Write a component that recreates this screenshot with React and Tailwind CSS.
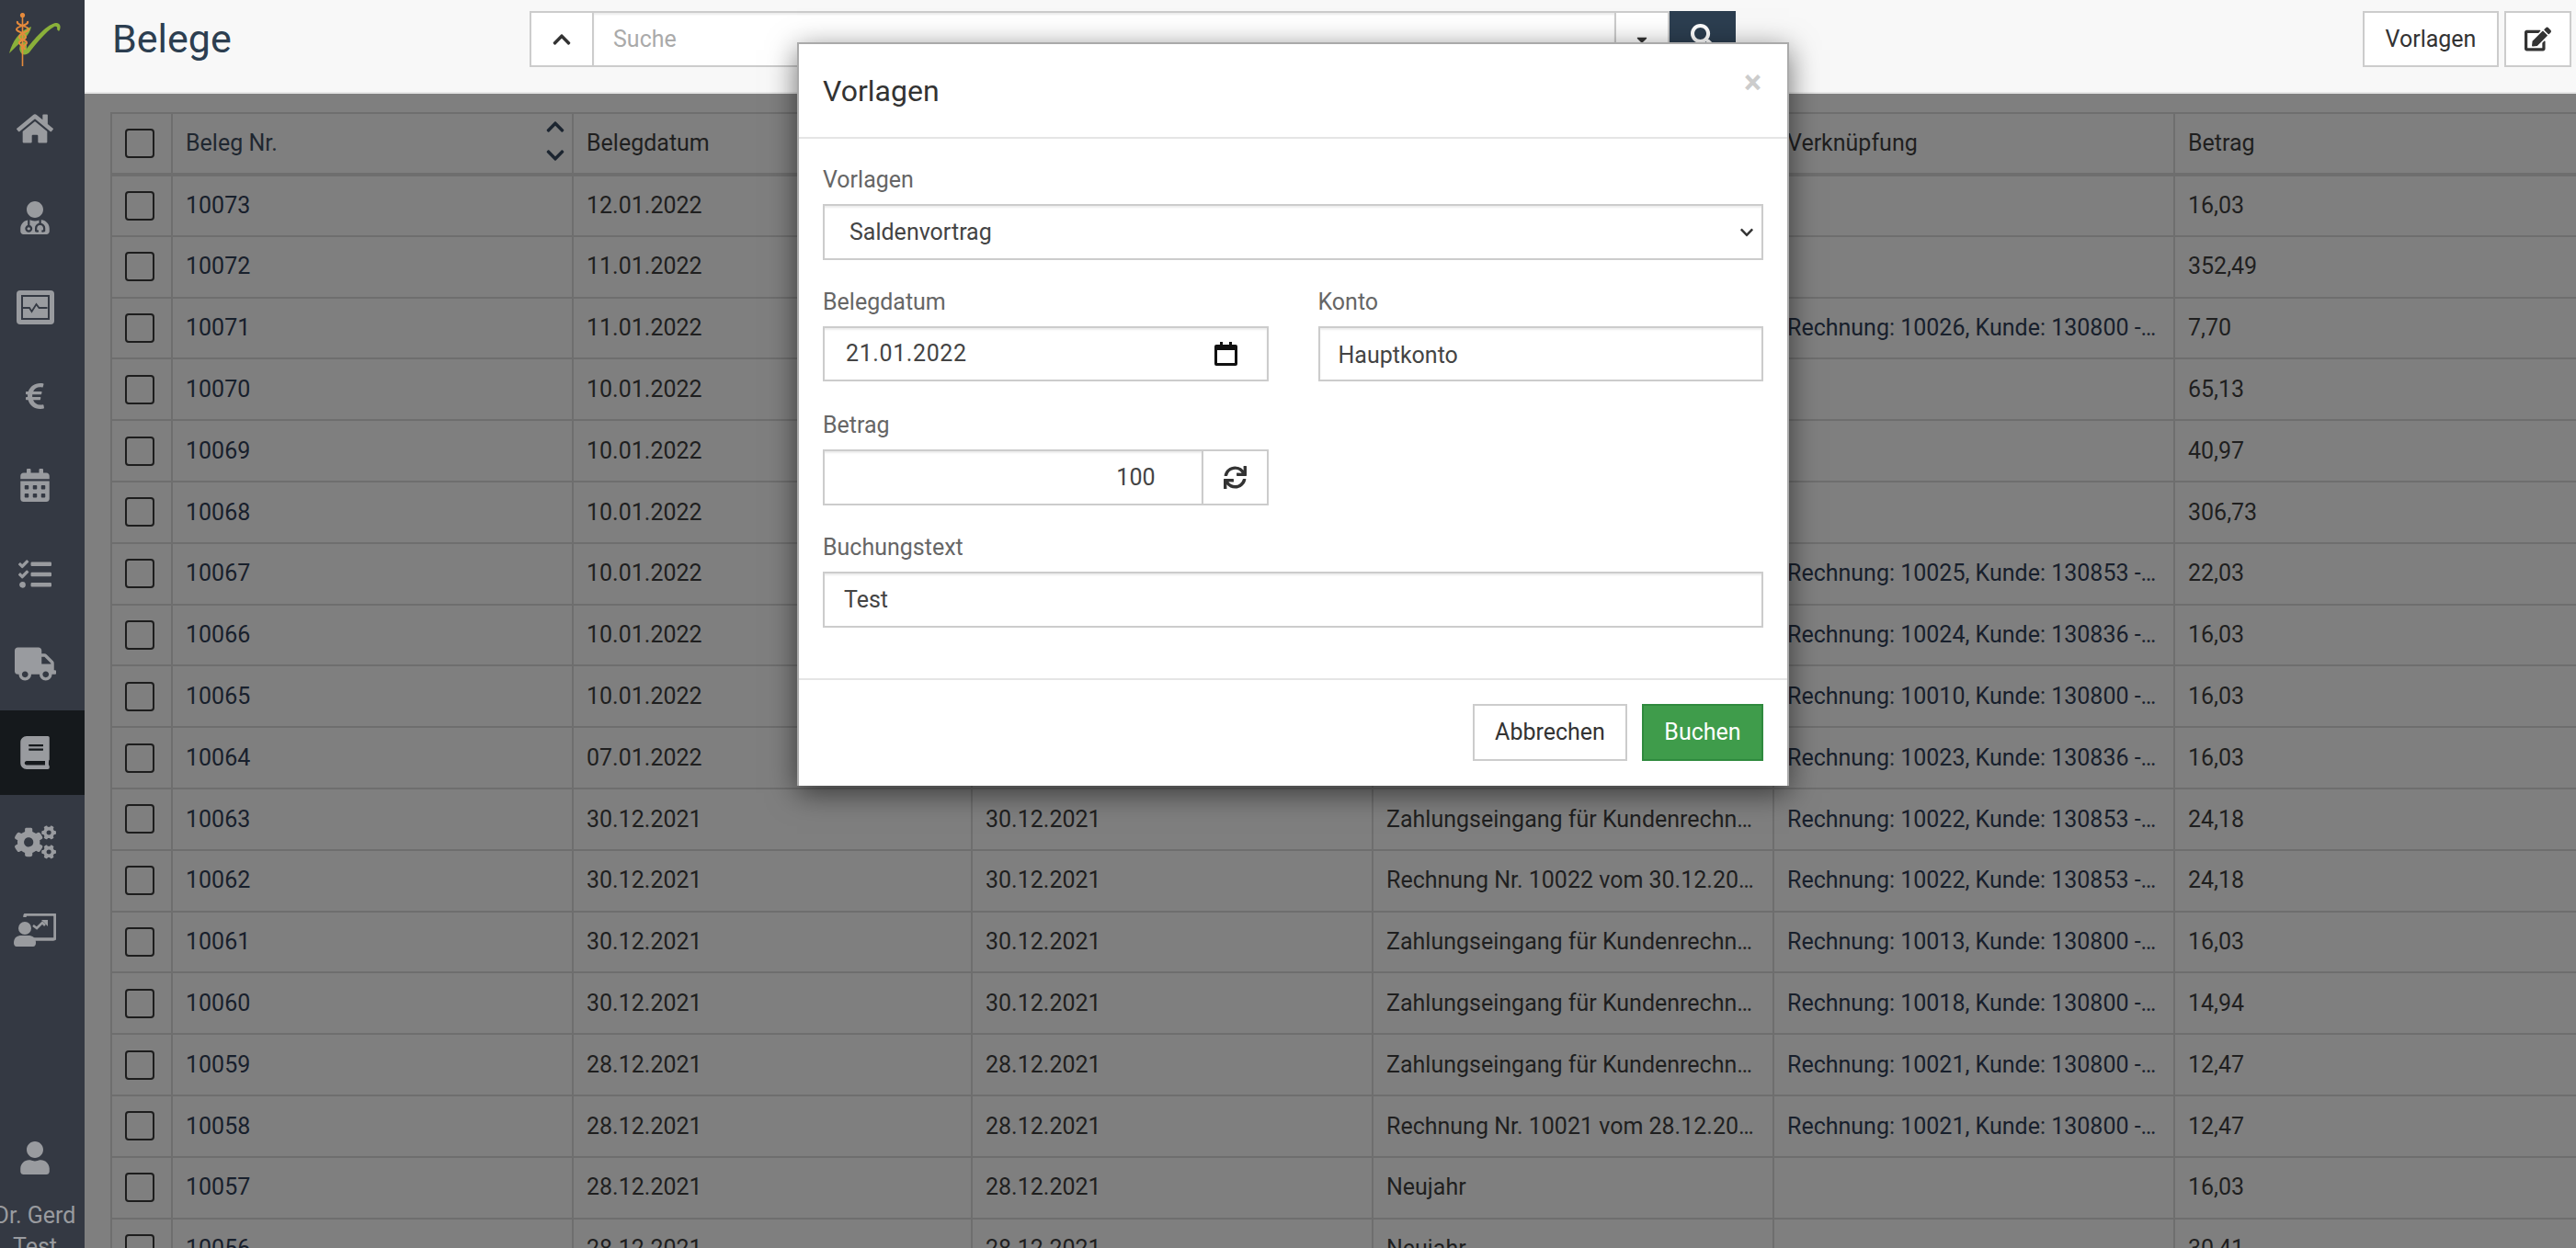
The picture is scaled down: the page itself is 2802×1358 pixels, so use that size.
import React from 'react';
import {
    FaHome, FaUserMd, FaEuroSign, FaCalendarAlt, FaTasks, FaTruck, FaBook, FaCogs,
    FaUser, FaSearch, FaSync, FaEdit, FaChevronUp, FaChevronDown, FaCaretDown,
} from 'react-icons/fa';

const ZE = 'Zahlungseingang für Kundenrechnung';

const rows = [
    ['10073', '12.01.2022', '', '', '16,03'],
    ['10072', '11.01.2022', '', '', '352,49'],
    ['10071', '11.01.2022', '', 'Rechnung: 10026, Kunde: 130800 - Mustermann', '7,70'],
    ['10070', '10.01.2022', '', '', '65,13'],
    ['10069', '10.01.2022', '', '', '40,97'],
    ['10068', '10.01.2022', '', '', '306,73'],
    ['10067', '10.01.2022', '', 'Rechnung: 10025, Kunde: 130853 - Mustermann', '22,03'],
    ['10066', '10.01.2022', '', 'Rechnung: 10024, Kunde: 130836 - Mustermann', '16,03'],
    ['10065', '10.01.2022', '', 'Rechnung: 10010, Kunde: 130800 - Mustermann', '16,03'],
    ['10064', '07.01.2022', '', 'Rechnung: 10023, Kunde: 130836 - Mustermann', '16,03'],
    ['10063', '30.12.2021', ZE, 'Rechnung: 10022, Kunde: 130853 - Mustermann', '24,18'],
    ['10062', '30.12.2021', 'Rechnung Nr. 10022 vom 30.12.2021 an Kunde', 'Rechnung: 10022, Kunde: 130853 - Mustermann', '24,18'],
    ['10061', '30.12.2021', ZE, 'Rechnung: 10013, Kunde: 130800 - Mustermann', '16,03'],
    ['10060', '30.12.2021', ZE, 'Rechnung: 10018, Kunde: 130800 - Mustermann', '14,94'],
    ['10059', '28.12.2021', ZE, 'Rechnung: 10021, Kunde: 130800 - Mustermann', '12,47'],
    ['10058', '28.12.2021', 'Rechnung Nr. 10021 vom 28.12.2021 an Kunde', 'Rechnung: 10021, Kunde: 130800 - Mustermann', '12,47'],
    ['10057', '28.12.2021', 'Neujahr', '', '16,03'],
    ['10056', '28.12.2021', 'Neujahr', '', '30,41'],
];

const MonitorIcon = () => (
    <svg width="41" height="37" viewBox="0 0 41 37">
        <rect width="41" height="37" rx="4" fill="#999b9f" />
        <rect x="6" y="6" width="29" height="25" fill="none" stroke="#343943" strokeWidth="2" />
        <path d="M7 19h7l2.500 4 5-8 3 4h9" fill="none" stroke="#343943" strokeWidth="1.800" />
    </svg>
);

const BoardIcon = () => (
    <svg width="46" height="38" viewBox="0 0 46 38">
        <path d="M12 4V3a2 2 0 0 1 2-2h29a2 2 0 0 1 2 2v23a2 2 0 0 1-2 2H22" fill="none" stroke="#999b9f" strokeWidth="3.500" />
        <circle cx="12" cy="16" r="7" fill="#999b9f" />
        <path d="M0 32c0-6 4-8 8-8h8c4 0 8 2 8 8 0 2-1 4-3 4H3c-2 0-3-2-3-4z" fill="#999b9f" />
        <path d="M21 13l4 3 6-6 3 3" fill="none" stroke="#999b9f" strokeWidth="2.600" />
        <path d="M30 7h7v7z" fill="#999b9f" />
    </svg>
);

const Logo = () => (
    <svg width="92" height="92" viewBox="0 0 92 92">
        <path d="M10 58c3-12 11-25 24-29-1 5-3 8-7 13-7 6-13 12-17 16z" fill="#8ab03a" />
        <path d="M22 49c3-6 8-4 7 4 8-10 20-25 31-28 6-1 7 5 4 9l-2-2c1-3-1-4-3-3-9 5-21 20-27 28-3 3-8 4-10-1-1-2-1-4 0-7z" fill="#8ab03a" />
        <path d="M24.500 14v58" stroke="#e58a3c" strokeWidth="1.600" fill="none" />
        <circle cx="24.500" cy="16.500" r="2.600" fill="#e58a3c" />
        <path d="M19 23c-2 5 12 5 12 9 0 3-9 3-10 8-1 4 9 3 8 7-1 3-6 3-5 7" stroke="#e58a3c" strokeWidth="2" fill="none" />
        <path d="M30 23c2 5-12 5-12 9 0 3 9 3 10 8 1 4-8 3-7 7 1 3 6 3 6 7" stroke="#e58a3c" strokeWidth="2" fill="none" />
    </svg>
);

const navItems = [
    { icon: <FaHome size={40} /> },
    { icon: <FaUserMd size={36} /> },
    { icon: <MonitorIcon /> },
    { icon: <FaEuroSign size={32} /> },
    { icon: <FaCalendarAlt size={36} /> },
    { icon: <FaTasks size={36} /> },
    { icon: <FaTruck size={45} /> },
    { icon: <FaBook size={36} />, active: true },
    { icon: <FaCogs size={45} /> },
    { icon: <BoardIcon /> },
];

const Sidebar = () => (
    <aside className="w-[92px] h-[1358px] shrink-0 bg-[#343943] text-[#999b9f] flex flex-col overflow-hidden">
        <div className="h-[94px] shrink-0">
            <Logo />
        </div>
        <nav className="flex flex-col gap-[5px]">
            {navItems.map((item, i) => (
                <div key={i} className={`h-[92px] pr-[16px] flex items-center justify-center ${item.active ? 'bg-[#15191c]' : ''}`}>
                    {item.icon}
                </div>
            ))}
        </nav>
        <div className="mt-[183px] w-[76px] flex flex-col items-center">
            <FaUser size={36} />
            <div className="mt-[28px] text-[25px] leading-[34px] text-center whitespace-nowrap">Dr. Gerd</div>
            <div className="text-[25px] leading-[34px] text-center">Test</div>
        </div>
    </aside>
);

const TopBar = () => (
    <header className="h-[102px] bg-[#f8f8f8] border-b-2 border-[#e6e6e6] pl-[30px] pr-[5px] pb-[14px] pt-[12px] flex items-start">
        <h1 className="w-[454px] text-[43px] leading-[61px] text-[#2c3e50]">Belege</h1>
        <div className="w-[1312px] h-[61px] flex">
            <button className="w-[70px] bg-white border-2 border-[#ccc] flex items-center justify-center text-[#333]">
                <FaChevronUp size={22} />
            </button>
            <input
                readOnly
                placeholder="Suche"
                className="flex-1 min-w-0 bg-white border-y-2 border-[#ccc] px-[21px] text-[25px] placeholder:text-[#aaa] shadow-[inset_0_2px_2px_rgba(0,0,0,0.075)]"
            />
            <button className="w-[60px] bg-white border-2 border-[#ccc] flex items-center justify-center text-[#333]">
                <FaCaretDown size={18} />
            </button>
            <button className="w-[72px] bg-[#2c3e50] flex items-start justify-center pt-[14px] text-white">
                <FaSearch size={26} />
            </button>
        </div>
        <div className="ml-auto flex gap-[6px] h-[61px]">
            <button className="w-[148px] bg-white border-2 border-[#ccc] text-[25px] text-[#333]">Vorlagen</button>
            <button className="w-[73px] bg-white border-2 border-[#ccc] flex items-center justify-center text-[#333]">
                <FaEdit size={29} />
            </button>
        </div>
    </header>
);

const Checkbox = () => (
    <div className="w-[32px] h-[32px] ml-[14px] border-2 border-[#1d1d1d] rounded-[4px]" />
);

const cell = 'border-2 border-[#6e6e6e] pl-[14px] pr-[15px] truncate';

const BelegTable = () => (
    <div className="pl-[28px] pt-[20px]">
        <table className="table-fixed border-collapse w-[2682px] text-[25px] text-[#1f1f1f]">
            <colgroup>
                <col className="w-[66px]" />
                <col className="w-[436px]" />
                <col className="w-[434px]" />
                <col className="w-[436px]" />
                <col className="w-[436px]" />
                <col className="w-[436px]" />
                <col className="w-[438px]" />
            </colgroup>
            <thead>
                <tr className="h-[67px] border-b-4 border-[#6a6a6a]">
                    <th className="border-2 border-[#6e6e6e] border-b-4"><Checkbox /></th>
                    <th className={`${cell} border-b-4 font-normal text-left`}>
                        <div className="flex items-center justify-between">
                            <span className="text-[#1f2730]">Beleg Nr.</span>
                            <span className="flex flex-col gap-[9px] -mr-[8px] -mt-[6px] text-[#1c2530]">
                                <FaChevronUp size={22} />
                                <FaChevronDown size={22} />
                            </span>
                        </div>
                    </th>
                    <th className={`${cell} border-b-4 font-normal text-left`}>Belegdatum</th>
                    <th className={`${cell} border-b-4 font-normal text-left`}></th>
                    <th className={`${cell} border-b-4 font-normal text-left`}></th>
                    <th className={`${cell} border-b-4 font-normal text-left`}>Verknüpfung</th>
                    <th className={`${cell} border-b-4 font-normal text-left`}>Betrag</th>
                </tr>
            </thead>
            <tbody>
                {rows.map((row) => (
                    <tr key={row[0]} className="h-[66.8px]">
                        <td className="border-2 border-[#6e6e6e]"><Checkbox /></td>
                        <td className={`${cell} text-[#18202c]`}>{row[0]}</td>
                        <td className={cell}>{row[1]}</td>
                        <td className={cell}>{row[1]}</td>
                        <td className={cell}>{row[2]}</td>
                        <td className={`${cell} text-[#18202c]`}>{row[3]}</td>
                        <td className={cell}>{row[4]}</td>
                    </tr>
                ))}
            </tbody>
        </table>
    </div>
);

const labelCls = 'block h-[44px] text-[25px] leading-[35px] text-[#666]';
const inputCls = 'w-full h-[61px] bg-white border-2 border-[#ccc] text-[25px] text-[#444] shadow-[inset_0_2px_2px_rgba(0,0,0,0.075)]';

const CalendarGlyph = () => (
    <svg width="25" height="26" viewBox="0 0 25 26" className="text-[#111]">
        <path d="M6 0h3v3h7V0h3v3h4a2 2 0 0 1 2 2v19a2 2 0 0 1-2 2H2a2 2 0 0 1-2-2V5a2 2 0 0 1 2-2h4z M3 9v14h19V9z" fill="currentColor" fillRule="evenodd" />
    </svg>
);

const VorlagenModal = () => (
    <div className="absolute left-[867px] top-[46px] w-[1079px] h-[809px] bg-white border-2 border-[#aaa] border-b-0 shadow-[0_8px_30px_rgba(0,0,0,0.55)]">
        <div className="h-[103px] border-b-2 border-[#e5e5e5] pl-[26px] pr-[28px] flex items-start justify-between">
            <h2 className="pt-[33px] text-[32px] leading-[36px] text-[#333]">Vorlagen</h2>
            <span className="pt-[21px] text-[36px] leading-[42px] font-bold text-[#ccc]">×</span>
        </div>
        <div className="px-[26px] pt-[27px]">
            <div className="mb-[28px]">
                <label className={labelCls}>Vorlagen</label>
                <div className="relative">
                    <select className={`${inputCls} appearance-none pl-[27px] pr-[8px]`} defaultValue="Saldenvortrag">
                        <option>Saldenvortrag</option>
                    </select>
                    <FaChevronDown size={16} className="absolute right-[10px] top-[23px] text-[#333]" />
                </div>
            </div>
            <div className="grid grid-cols-2 gap-x-[54px] mb-[30px]">
                <div>
                    <label className={labelCls}>Belegdatum</label>
                    <div className={`${inputCls} !h-[60px] pl-[23px] pr-[32px] flex items-center justify-between`}>
                        <span className="tracking-[0.6px]">21.01.2022</span>
                        <CalendarGlyph />
                    </div>
                </div>
                <div>
                    <label className={labelCls}>Konto</label>
                    <input readOnly value="Hauptkonto" className={`${inputCls} !h-[60px] px-[20px] pt-[2px]`} />
                </div>
            </div>
            <div className="grid grid-cols-2 gap-x-[54px] mb-[28px]">
                <div>
                    <label className={labelCls}>Betrag</label>
                    <div className="flex h-[61px]">
                        <input readOnly value="100" className={`${inputCls} border-r-0 flex-1 min-w-0 text-right pr-[50px]`} />
                        <button className="w-[73px] bg-white border-2 border-[#ccc] flex items-center justify-center text-[#333]">
                            <FaSync size={25} />
                        </button>
                    </div>
                </div>
            </div>
            <div className="mb-[55px]">
                <label className={labelCls}>Buchungstext</label>
                <input readOnly value="Test" className={`${inputCls} px-[21px]`} />
            </div>
        </div>
        <div className="border-t-2 border-[#e5e5e5] pt-[26px] pr-[26px] flex justify-end gap-[16px]">
            <button className="w-[168px] h-[62px] bg-white border-2 border-[#ccc] text-[25px] text-[#333]">Abbrechen</button>
            <button className="w-[132px] h-[62px] bg-[#3f9c4b] border-2 border-[#2f8a3e] text-[25px] text-white">Buchen</button>
        </div>
    </div>
);

export default function App() {
    return (
        <div className="relative w-[2802px] h-[1358px] overflow-hidden flex font-['Roboto',sans-serif] bg-[#7f7f7f]">
            <Sidebar />
            <main className="flex-1 min-w-0">
                <TopBar />
                <BelegTable />
            </main>
            <VorlagenModal />
        </div>
    );
}
